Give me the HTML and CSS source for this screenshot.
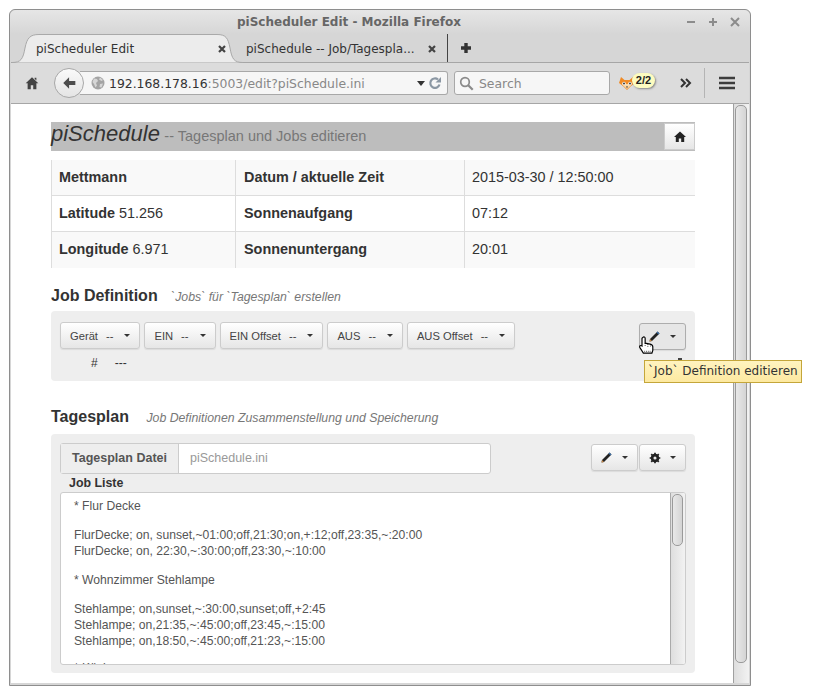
FILE: index.html
```html
<!DOCTYPE html>
<html>
    <head>
        <meta http-equiv="Content-Type" content="text/html; charset=utf-8">
        <title>pi Scheduler Edit</title>
        <link rel="stylesheet" href="styles.css">
    </head>
    <body>
        <div class="window">
            <div class="titlebar">
                <span class="title">piScheduler Edit - Mozilla Firefox</span>
                <span class="winbuttons">
                    <svg width="12" height="12" viewBox="0 0 12 12"><path d="M2 6h8" stroke="#8c8c8c" stroke-width="2"/></svg>
                    <svg width="12" height="12" viewBox="0 0 12 12"><path d="M2 6h8M6 2v8" stroke="#8c8c8c" stroke-width="2"/></svg>
                    <svg width="12" height="12" viewBox="0 0 12 12"><path d="M2 2l8 8M10 2l-8 8" stroke="#8c8c8c" stroke-width="2"/></svg>
                </span>
            </div>

            <div class="tabstrip">
                <div class="tab tab-active">
                    <svg class="tab-shape" width="232" height="29" viewBox="0 0 232 29"><path d="M0 28.5C9 28.5 11 25 13 14 15 4 18 .5 27 .5H205C214 .5 216 4 218 14 220 25 222 28.5 231 28.5" fill="#ececec" stroke="#a9a9a9"/></svg>
                    <span class="tab-label">piScheduler Edit</span>
                    <svg class="tab-close" width="10" height="10" viewBox="0 0 10 10"><path d="M2 2l6 6M8 2l-6 6" stroke="#444" stroke-width="2.2"/></svg>
                </div>
                <div class="tab tab-other">
                    <span class="tab-label">piSchedule -- Job/Tagespla...</span>
                    <svg class="tab-close" width="10" height="10" viewBox="0 0 10 10"><path d="M2 2l6 6M8 2l-6 6" stroke="#444" stroke-width="2.2"/></svg>
                </div>
                <svg class="newtab" width="12" height="12" viewBox="0 0 12 12"><path d="M6 1v10M1 6h10" stroke="#333" stroke-width="3.4"/></svg>
            </div>

            <div class="toolbar">
                <svg class="tb-home" width="14" height="14" viewBox="0 0 16 16"><path d="M8 1.500L.8 8.400h2.200V15h3.600v-4.400h2.800V15H13V8.400h2.200zM11 2h2v3l-2-2z" fill="#444"/></svg>
                <div class="backbutton">
                    <svg width="15" height="14" viewBox="0 0 18 16"><path d="M8.500 1L1.500 8l7 7V10.500H16v-5H8.500z" fill="#4d4d4d"/></svg>
                </div>
                <div class="urlbar">
                    <svg class="globe" width="14" height="14" viewBox="0 0 14 14"><circle cx="7" cy="7" r="6.500" fill="#a4a4a4"/><path d="M3 2.500l3 .5 1 2-2 2 1 2.500-1.500 2L3 8 1.500 6zM9 1.500l3 2.500-1.500 1L8 3.500zM9 8l3-.5-1.500 4L8.500 11z" fill="#d6d6d6"/></svg>
                    <span class="url"><span class="url-host">192.168.178.16</span>:5003/edit?piSchedule.ini</span>
                    <span class="url-drop"></span>
                    <svg class="reload" width="14" height="14" viewBox="0 0 14 14"><path d="M11.500 8.500A4.700 4.700 0 1 1 10 3.500" fill="none" stroke="#8b97a3" stroke-width="2.200"/><path d="M13 1v5.500H7.500z" fill="#8b97a3"/></svg>
                </div>
                <div class="searchbar">
                    <svg width="15" height="15" viewBox="0 0 15 15"><circle cx="6" cy="6" r="4.300" fill="none" stroke="#8a8a8a" stroke-width="1.700"/><path d="M9.200 9.200l4.500 4.500" stroke="#8a8a8a" stroke-width="2.200"/></svg>
                    <span>Search</span>
                </div>
                <div class="foxbox">
                    <svg width="16" height="14" viewBox="0 0 16 14"><path d="M0 7L2 1 5.500 4h5L14 1 16 7 12 10 8 14 4 10z" fill="#f08a24"/><path d="M3 8h10l-1.500 2L8 13 4.500 10z" fill="#fbd9a8"/><circle cx="5" cy="7.500" r="1.700" fill="#fff"/><circle cx="11" cy="7.500" r="1.700" fill="#fff"/><circle cx="5" cy="7.500" r=".9" fill="#222"/><circle cx="11" cy="7.500" r=".9" fill="#222"/><path d="M7 10.500h2L8 12z" fill="#222"/></svg>
                    <span class="badge">2/2</span>
                </div>
                <svg class="chevrons" width="12" height="10" viewBox="0 0 12 10"><path d="M1 1l4 4-4 4M6 1l4 4-4 4" fill="none" stroke="#333" stroke-width="2"/></svg>
                <span class="tb-sep"></span>
                <svg class="burger" width="16" height="14" viewBox="0 0 16 14"><path d="M0 2h16M0 7h16M0 12h16" stroke="#3d3d3d" stroke-width="2.400"/></svg>
            </div>

            <div class="viewport">
                <div class="page">
                    <div class="headbar">
                        <span class="headbar-text"><em>piSchedule</em> <small>-- Tagesplan und Jobs editieren</small></span>
                        <a class="homebtn"><svg width="12" height="11" viewBox="0 0 12 11"><path d="M6 .5L0 6h1.800v5h3V7.500h2.400V11h3V6H12z" fill="#222"/></svg></a>
                    </div>

                    <table class="info">
                        <tr>
                            <td class="col-a"><b>Mettmann</b></td>
                            <td class="col-b"><b>Datum / aktuelle Zeit</b></td>
                            <td class="col-c">2015-03-30 / 12:50:00</td>
                        </tr>
                        <tr>
                            <td><b>Latitude</b> 51.256</td>
                            <td class="col-mid"><b>Sonnenaufgang</b></td>
                            <td>07:12</td>
                        </tr>
                        <tr class="row-last">
                            <td><b>Longitude</b> 6.971</td>
                            <td class="col-mid"><b>Sonnenuntergang</b></td>
                            <td>20:01</td>
                        </tr>
                    </table>

                    <h3 class="sect sect-job">Job Definition <small>`Jobs` für `Tagesplan` erstellen</small></h3>
                    <div class="well well-job">
                        <div class="btnrow">
                            <a class="btn">Gerät<span class="dash">--</span><i class="caret"></i></a>
                            <a class="btn">EIN<span class="dash">--</span><i class="caret"></i></a>
                            <a class="btn">EIN Offset<span class="dash">--</span><i class="caret"></i></a>
                            <a class="btn">AUS<span class="dash">--</span><i class="caret"></i></a>
                            <a class="btn">AUS Offset<span class="dash">--</span><i class="caret"></i></a>
                            <a class="btn btn-tool btn-hover">
                                <svg width="14" height="14" viewBox="0 0 14 14"><path d="M10.500 1.500l2 2L5 11 2.500 11.500 3 9z" fill="#222"/><path d="M10.500 1.500l2 2-1 1-2-2z" fill="#3a6ea5"/><path d="M3 9l2 2-2.500.5z" fill="#c98b4a"/></svg>
                                <i class="caret"></i>
                            </a>
                        </div>
                        <div class="jobline"><span class="job-num">#</span><span>---</span></div>
                    </div>

                    <h3 class="sect sect-plan">Tagesplan <small>Job Definitionen Zusammenstellung und Speicherung</small></h3>
                    <div class="well well-plan">
                        <div class="filerow">
                            <div class="inputgroup">
                                <label>Tagesplan Datei</label>
                                <span class="inputfield">piSchedule.ini</span>
                            </div>
                            <div class="toolgroup">
                                <a class="btn btn-tool">
                                    <svg width="14" height="14" viewBox="0 0 14 14"><path d="M10.500 1.500l2 2L5 11 2.500 11.500 3 9z" fill="#222"/><path d="M10.500 1.500l2 2-1 1-2-2z" fill="#3a6ea5"/><path d="M3 9l2 2-2.500.5z" fill="#c98b4a"/></svg>
                                    <i class="caret"></i>
                                </a>
                                <a class="btn btn-tool btn-gear">
                                    <svg width="12" height="12" viewBox="0 0 14 14"><circle cx="7" cy="7" r="3.600" fill="none" stroke="#222" stroke-width="2.800"/><path d="M7 .8v12.400M.8 7h12.400M2.600 2.600l8.800 8.800M11.400 2.600l-8.800 8.800" stroke="#222" stroke-width="2"/><circle cx="7" cy="7" r="1.800" fill="#e8e8e8"/></svg>
                                    <i class="caret"></i>
                                </a>
                            </div>
                        </div>
                        <div class="joblabel">Job Liste</div>
                        <div class="joblist">
                            <div class="joblist-text">
                                <p>* Flur Decke</p>
                                <p class="gap">FlurDecke; on, sunset,~01:00;off,21:30;on,+:12;off,23:35,~:20:00</p>
                                <p>FlurDecke; on, 22:30,~:30:00;off,23:30,~:10:00</p>
                                <p class="gap">* Wohnzimmer Stehlampe</p>
                                <p class="gap">Stehlampe; on,sunset,~:30:00,sunset;off,+2:45</p>
                                <p>Stehlampe; on,21:35,~:45:00;off,23:45,~:15:00</p>
                                <p>Stehlampe; on,18:50,~:45:00;off,21:23,~:15:00</p>
                                <p class="gap-last">* Küche</p>
                            </div>
                            <div class="innerscroll"><span class="innerthumb"></span></div>
                        </div>
                    </div>
                </div>
                <div class="pagescroll"><span class="pagethumb"></span></div>

                <span class="speck"></span>
                <div class="tooltip">`Job` Definition editieren</div>
                <svg class="hand" width="17" height="18" viewBox="0 0 17 20"><path d="M4.500 1.500c1-1 2.500-.5 2.500 1V8l5.500 1c2 .5 3 1.500 3 3v4l-1 3H5L1 12.500c-.5-1.500 1-2.500 2.500-1.500V2.500z" fill="#fff" stroke="#000" stroke-width="1.300"/><path d="M7 8v4M10 9v3M13 9.500V12M6 17h8" stroke="#000" stroke-width=".8" stroke-dasharray="1 1"/></svg>
            </div>
        </div>
    </body>
</html>
```

FILE: styles.css
```css
* {
    box-sizing: border-box;
}

body {
    margin: 0;
    background: white;
    font-family: "Liberation Sans", sans-serif;
    color: #333;
}

.window {
    margin: 9px 0 0 9px;
    width: 742px;
    height: 677px;
    border: 1px solid #8e8e8e;
    border-radius: 6px 6px 0 0;
    background: #d6d6d6;
    display: flex;
    flex-direction: column;
    padding: 0 1px 2px;
}

/* firefox chrome */
.titlebar {
    height: 24px;
    display: flex;
    align-items: center;
    justify-content: center;
    position: relative;
    margin: 0 -1px;
    padding-right: 62px;
    border-radius: 6px 6px 0 0;
    background: linear-gradient(#e6e6e6, #d6d6d6);
}

.title {
    font: bold 12px "DejaVu Sans", sans-serif;
    color: #666;
}

.winbuttons {
    position: absolute;
    right: 9px;
    top: 6px;
    display: flex;
    gap: 10px;
}

.tabstrip {
    height: 29px;
    display: flex;
    align-items: center;
    border-bottom: 1px solid #a6a6a6;
    font: 12px "DejaVu Sans", sans-serif;
    color: #333;
}

.tab {
    height: 29px;
    padding-top: 1px;
    position: relative;
    display: flex;
    align-items: center;
}

.tab-active {
    width: 231px;
    margin-left: 1px;
}

.tab-shape {
    position: absolute;
    left: 0;
    top: 0;
}

.tab-label {
    position: relative;
}

.tab-close {
    position: relative;
    margin-left: auto;
}

.tab-active .tab-label {
    margin-left: 24px;
}

.tab-active .tab-close {
    margin-right: 16px;
}

.tab-other {
    width: 207px;
    border-right: 1px solid #444;
    margin-left: -2px;
    padding-left: 5px;
    height: 28px;
}

.tab-other .tab-close {
    margin-right: 10px;
}

.newtab {
    margin-left: 12px;
}

.toolbar {
    height: 40px;
    display: flex;
    align-items: center;
    background: #dcdcdc;
    position: relative;
}

.tb-home {
    margin-left: 14px;
}

.backbutton {
    width: 30px;
    height: 30px;
    margin-left: 15px;
    border-radius: 50%;
    border: 1px solid #a8a8a8;
    background: linear-gradient(#fafafa, #e4e4e4);
    display: flex;
    align-items: center;
    justify-content: center;
    position: relative;
    z-index: 1;
}

.urlbar {
    width: 368px;
    height: 24px;
    margin-left: -4px;
    border: 1px solid #a8a8a8;
    border-left: 0;
    border-radius: 0 3px 3px 0;
    background: #f6f6f6;
    display: flex;
    align-items: center;
    font: 12.4px "DejaVu Sans", sans-serif;
    color: #888;
}

.globe {
    margin-left: 11px;
}

.url {
    margin-left: 4px;
}

.url-host {
    color: #333;
}

.url-drop {
    margin-left: auto;
    border-top: 5px solid #333;
    border-left: 4px solid transparent;
    border-right: 4px solid transparent;
}

.reload {
    margin: 0 5px 0 3px;
}

.searchbar {
    width: 156px;
    height: 24px;
    margin-left: 6px;
    border: 1px solid #a8a8a8;
    border-radius: 3px;
    background: #f6f6f6;
    display: flex;
    align-items: center;
    gap: 5px;
    padding-left: 4px;
    font: 12.4px "DejaVu Sans", sans-serif;
    color: #888;
}

.foxbox {
    width: 46px;
    margin-left: 9px;
    position: relative;
    height: 20px;
    display: flex;
    align-items: center;
}

.badge {
    position: absolute;
    left: 13px;
    top: 0;
    width: 23px;
    height: 15px;
    border-radius: 8px;
    background: #fdfcc0;
    box-shadow: 1px 1px 2px #888;
    font: bold 11px "Liberation Sans", sans-serif;
    color: #222;
    text-align: center;
    line-height: 15px;
}

.chevrons {
    margin-left: 15px;
}

.tb-sep {
    width: 1px;
    height: 30px;
    margin-left: 12px;
    background: #b4b4b4;
}

.burger {
    margin-left: 14px;
}

/* page */
.viewport {
    flex: 1;
    min-height: 0;
    display: flex;
    position: relative;
    background: white;
    border-top: 1px solid #a6a6a6;
}

.page {
    flex: 1;
    min-width: 0;
    overflow: hidden;
    padding: 18px 38px 0 40px;
}

.pagescroll {
    width: 16px;
    border-left: 1px solid #a0a0a0;
    background: linear-gradient(90deg, #dedede, #f2f2f2);
    padding: 1px 2px 0 1px;
}

.pagethumb {
    display: block;
    height: 558px;
    border: 1px solid #9a9a9a;
    border-radius: 5px;
    background: linear-gradient(90deg, #e8e8e8, #d4d4d4);
}

.headbar {
    height: 29px;
    background: #bdbdbd;
    display: flex;
    align-items: center;
    justify-content: space-between;
}

.headbar-text {
    padding-bottom: 5px;
}

.headbar-text em {
    font-size: 22px;
    color: #333;
}

.headbar-text small {
    font-size: 14.5px;
    color: #777;
}

.homebtn {
    width: 31px;
    height: 27px;
    background: linear-gradient(#fff, #e6e6e6);
    border: 1px solid #ccc;
    display: flex;
    align-items: center;
    justify-content: center;
}

.info {
    width: 100%;
    margin-top: 9px;
    border-collapse: collapse;
    font-size: 14.4px;
    table-layout: fixed;
}

.info td {
    padding: 8px 7px;
    border: 1px solid #ddd;
    border-top-width: 0;
    border-right-width: 0;
    vertical-align: top;
    line-height: 19px;
}

.info tr:nth-child(odd) td {
    background: #f9f9f9;
}

.info .row-last td {
    border-bottom: 0;
    padding-bottom: 9px;
}

.col-a {
    width: 184px;
}

.col-b {
    width: 229px;
}

.info .col-b, .info .col-mid {
    padding-left: 8px;
}

.sect {
    margin: 0;
    font-size: 16px;
    line-height: 18px;
    color: #333;
}

.sect small {
    font-size: 12.3px;
    font-weight: normal;
    font-style: italic;
    color: #777;
}

.sect-job {
    margin-top: 19px;
}

.sect-job small {
    margin-left: 9px;
}

.sect-plan {
    margin-top: 27px;
}

.sect-plan small {
    margin-left: 13px;
}

.well {
    background: #eee;
    border-radius: 4px;
    padding: 9px;
}

.well-job {
    margin-top: 5px;
    height: 70px;
    padding-top: 11px;
}

.well-plan {
    margin-top: 7px;
    height: 239px;
}

.btnrow {
    display: flex;
    gap: 4px;
}

.btn {
    height: 27px;
    padding: 0 9px;
    display: flex;
    align-items: center;
    border: 1px solid #ccc;
    border-radius: 3px;
    background: linear-gradient(#fff, #e6e6e6);
    box-shadow: 0 1px 1px rgba(0, 0, 0, .08);
    font-size: 11.2px;
    color: #444;
}

.dash {
    margin: 0 11px 0 8px;
}

.caret {
    width: 0;
    height: 0;
    border-top: 3px solid #333;
    border-left: 3.500px solid transparent;
    border-right: 3.500px solid transparent;
}

.btn-tool {
    width: 47px;
    padding-left: 7px;
    justify-content: space-between;
}

.btn-gear {
    padding-left: 9px;
}

.btn-hover {
    margin-left: auto;
    margin-top: 1px;
    background: #e6e6e6;
    border-color: #adadad;
}

.jobline {
    margin: 6px 0 0 31px;
    font-size: 12px;
    display: flex;
    gap: 17px;
}

.filerow {
    display: flex;
    justify-content: space-between;
}

.inputgroup {
    width: 431px;
    height: 31px;
    display: flex;
    border: 1px solid #ccc;
    border-radius: 3px;
    background: white;
    font-size: 12.5px;
}

.inputgroup label {
    width: 118px;
    background: #eee;
    border-right: 1px solid #ccc;
    font-weight: bold;
    color: #555;
    line-height: 29px;
    text-align: center;
}

.inputfield {
    padding-left: 11px;
    line-height: 29px;
    color: #999;
}

.toolgroup {
    display: flex;
    gap: 1px;
    padding-top: 1px;
}

.joblabel {
    font-size: 12.4px;
    font-weight: bold;
    line-height: 14px;
    margin: 2px 0 2px 9px;
}

.joblist {
    height: 173px;
    border: 1px solid #ccc;
    border-radius: 3px;
    background: white;
    display: flex;
    overflow: hidden;
}

.joblist-text {
    flex: 1;
    padding: 5px 0 0 13px;
    font-size: 12.15px;
    line-height: 16px;
    color: #555;
}

.joblist-text p {
    margin: 0;
}

.joblist-text .gap {
    margin-top: 13px;
}

.joblist-text .gap-last {
    margin-top: 11px;
}

.innerscroll {
    width: 15px;
    border-left: 1px solid #aaa;
    background: linear-gradient(90deg, #dedede, #f2f2f2);
    padding: 1px 2px 0 1px;
}

.innerthumb {
    display: block;
    height: 52px;
    border: 1px solid #9a9a9a;
    border-radius: 5px;
    background: linear-gradient(90deg, #e8e8e8, #d4d4d4);
}

.tooltip {
    position: absolute;
    left: 633px;
    top: 256px;
    width: 158px;
    height: 23px;
    border: 1px solid #c4a63a;
    background: linear-gradient(#fff3c0, #fde9a0);
    font: 12px/20px "DejaVu Sans", sans-serif;
    color: #333;
    padding-left: 3px;
    white-space: nowrap;
}

.hand {
    position: absolute;
    left: 627px;
    top: 232px;
}

.speck {
    position: absolute;
    left: 667px;
    top: 254px;
    width: 4px;
    height: 2px;
    background: #444;
}
```
